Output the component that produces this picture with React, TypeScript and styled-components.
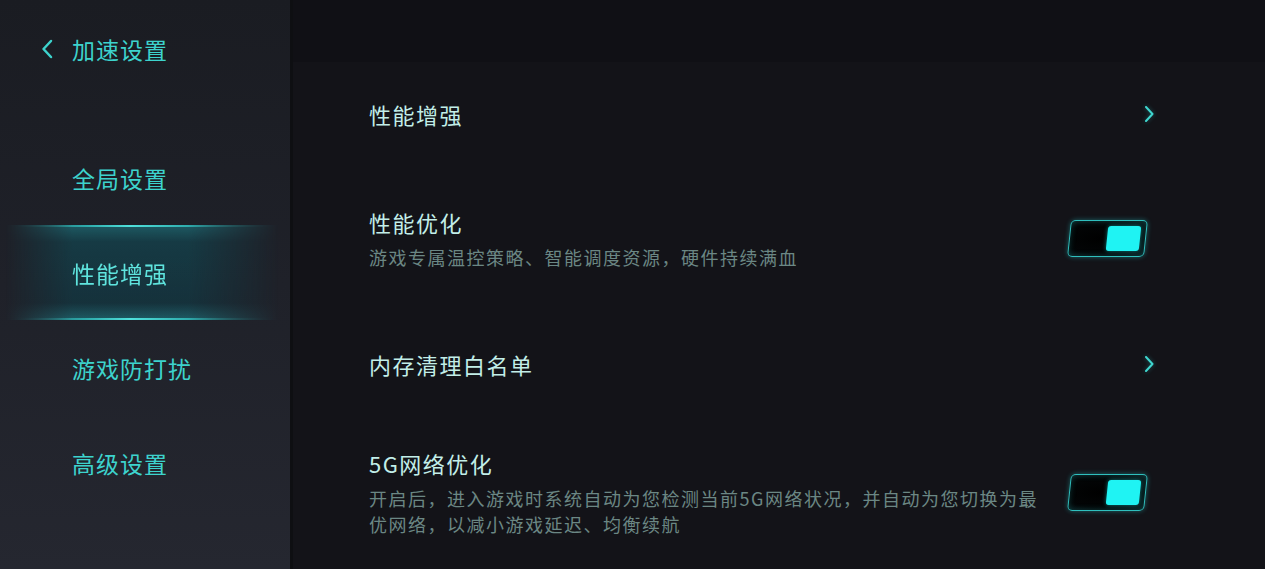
import React, { useState } from "react";
import styled, { createGlobalStyle } from "styled-components";

const Global = createGlobalStyle`
  html, body { margin: 0; padding: 0; background: #131318; }
  body { font-family: "Noto Sans CJK SC", "Noto Sans", sans-serif; }
  #root { width: 1265px; height: 569px; overflow: hidden; }
`;

const Page = styled.div`
  display: flex;
  width: 1265px;
  height: 569px;
  overflow: hidden;
`;

const Sidebar = styled.aside`
  width: 290px;
  flex-shrink: 0;
  display: flex;
  flex-direction: column;
  background: linear-gradient(180deg, #1a1c22 0%, #1f2129 50%, #252730 100%);
`;

const Header = styled.div`
  height: 98px;
  display: flex;
  align-items: center;
  padding-left: 40px;
  gap: 17px;
  color: #3dd3cd;
  font-size: 23px;
  letter-spacing: 1px;
`;

const BackIcon = styled.svg`
  width: 15px;
  height: 20px;
  display: block;
`;

const Nav = styled.nav`
  margin-top: 32px;
  display: flex;
  flex-direction: column;
`;

const NavItem = styled.div<{ $active?: boolean }>`
  position: relative;
  height: 95px;
  display: flex;
  align-items: center;
  padding-left: 72px;
  font-size: 23px;
  letter-spacing: 1px;
  color: ${(p) => (p.$active ? "#5fe4de" : "#3dd3cd")};
  ${(p) =>
    p.$active
      ? `
    background:
      linear-gradient(180deg, rgba(30,130,140,0.6) 0%, rgba(14,84,96,0.5) 18%, rgba(10,70,82,0.45) 82%, rgba(30,130,140,0.6) 100%);
    -webkit-mask-image: linear-gradient(90deg, transparent 2%, #000 25%, #000 65%, transparent 96%);
    mask-image: linear-gradient(90deg, transparent 2%, #000 25%, #000 65%, transparent 96%);
  `
      : ""}

  &::before,
  &::after {
    content: "";
    display: ${(p) => (p.$active ? "block" : "none")};
    position: absolute;
    left: 0;
    right: 0;
    height: 2px;
    background: linear-gradient(
      90deg,
      rgba(52, 200, 198, 0) 5%,
      rgba(52, 200, 198, 0.75) 30%,
      rgba(80, 225, 220, 1) 45%,
      rgba(52, 200, 198, 0.75) 65%,
      rgba(52, 200, 198, 0) 95%
    );
  }
  &::before { top: 0; }
  &::after { bottom: 0; }
`;

const Main = styled.main`
  flex: 1;
  border-left: 3px solid #0e0f12;
  background: linear-gradient(180deg, #101015 0px, #101015 62px, #131318 62px, #131318 100%);
  display: flex;
  flex-direction: column;
  padding-top: 51px;
  padding-left: 76px;
  padding-right: 113px;
`;

const Row = styled.div`
  min-height: 125px;
  box-sizing: border-box;
  padding: 22px 0;
  display: flex;
  align-items: center;
  justify-content: space-between;
  flex-shrink: 0;
`;

const TextCol = styled.div`
  display: flex;
  flex-direction: column;
  gap: 7px;
`;

const Title = styled.div`
  font-size: 22px;
  line-height: 30px;
  letter-spacing: 1.5px;
  color: #c2eee8;
`;

const Sub = styled.div`
  font-size: 18px;
  line-height: 26px;
  letter-spacing: 1.5px;
  color: #6b8784;
  max-width: 686px;
`;

const Chevron = styled.svg`
  width: 12px;
  height: 18px;
  display: block;
  margin-right: -3px;
  filter: drop-shadow(0 0 2px rgba(40, 200, 200, 0.4));
`;

const Toggle = styled.button<{ $on: boolean }>`
  width: 77px;
  height: 37px;
  margin-right: 6px;
  padding: 0 5px;
  box-sizing: border-box;
  transform: skewX(-6deg);
  border-radius: 5px;
  border: 1.5px solid #2fbfbd;
  background: radial-gradient(ellipse at 40% 50%, #000 0%, #030506 60%, #0a1a1d 100%);
  box-shadow: 0 0 5px rgba(40, 200, 200, 0.45), inset 0 0 6px rgba(40, 200, 200, 0.25);
  display: flex;
  align-items: center;
  justify-content: ${(p) => (p.$on ? "flex-end" : "flex-start")};
  cursor: pointer;
`;

const Knob = styled.span`
  width: 33px;
  height: 25px;
  border-radius: 3px;
  background: #1ff3f3;
  box-shadow: 0 0 4px rgba(31, 243, 243, 0.5);
`;

const ChevronRight = () => (
  <Chevron viewBox="0 0 12 18">
    <path d="M3 2 L9.5 9 L3 16" fill="none" stroke="#3fd6cf" strokeWidth="2" strokeLinecap="round" strokeLinejoin="round" />
  </Chevron>
);

export default function App() {
  const [perf, setPerf] = useState(true);
  const [net, setNet] = useState(true);
  const navItems = ["全局设置", "性能增强", "游戏防打扰", "高级设置"];
  return (
    <>
      <Global />
      <Page>
        <Sidebar>
          <Header>
            <BackIcon viewBox="0 0 15 20">
              <path d="M11 2 L3.5 10 L11 18" fill="none" stroke="#3dd3cd" strokeWidth="2.5" strokeLinecap="round" strokeLinejoin="round" />
            </BackIcon>
            <span>加速设置</span>
          </Header>
          <Nav>
            {navItems.map((t) => (
              <NavItem key={t} $active={t === "性能增强"}>
                {t}
              </NavItem>
            ))}
          </Nav>
        </Sidebar>
        <Main>
          <Row>
            <Title>性能增强</Title>
            <ChevronRight />
          </Row>
          <Row>
            <TextCol>
              <Title>性能优化</Title>
              <Sub>游戏专属温控策略、智能调度资源，硬件持续满血</Sub>
            </TextCol>
            <Toggle $on={perf} onClick={() => setPerf(!perf)} aria-label="性能优化">
              <Knob />
            </Toggle>
          </Row>
          <Row>
            <Title>内存清理白名单</Title>
            <ChevronRight />
          </Row>
          <Row>
            <TextCol>
              <Title>5G网络优化</Title>
              <Sub>开启后，进入游戏时系统自动为您检测当前5G网络状况，并自动为您切换为最优网络，以减小游戏延迟、均衡续航</Sub>
            </TextCol>
            <Toggle $on={net} onClick={() => setNet(!net)} aria-label="5G网络优化">
              <Knob />
            </Toggle>
          </Row>
        </Main>
      </Page>
    </>
  );
}
